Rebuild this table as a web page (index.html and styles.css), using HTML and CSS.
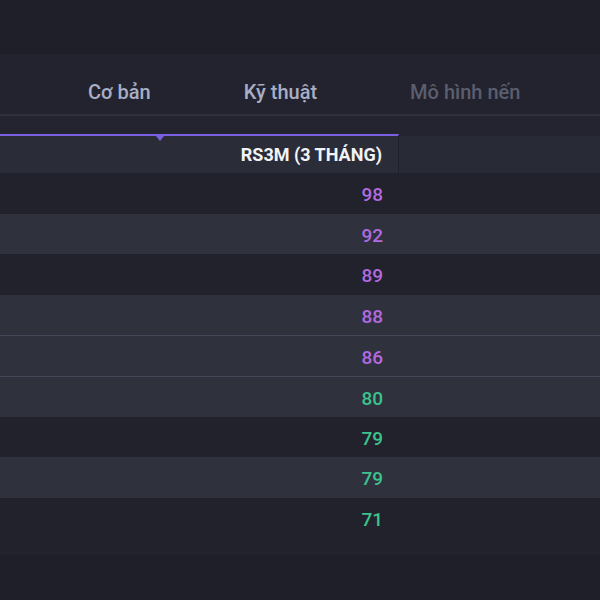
FILE: index.html
```html
<!DOCTYPE html>
<html lang="vi">
<head>
  <meta charset="UTF-8" />
  <title>RS3M</title>
  <meta name="viewport" content="width=device-width, initial-scale=1.0" />
  <link rel="stylesheet" href="styles.css">
</head>
<body>
  <div class="topbar"></div>

  <nav class="tabs">
    <span class="tab">Cơ bản</span>
    <span class="tab">Kỹ thuật</span>
    <span class="tab dim">Mô hình nến</span>
  </nav>

  <div class="gap"></div>

  <div class="grid">
    <div class="head main">RS3M (3 THÁNG)<i class="caret"></i></div>
    <div class="head rest"></div>

    <div class="row dark"><span class="num purple">98</span></div>
    <div class="row light"><span class="num purple">92</span></div>
    <div class="row dark"><span class="num purple">89</span></div>
    <div class="row light"><span class="num purple">88</span></div>
    <div class="row light line"><span class="num purple">86</span></div>
    <div class="row light line"><span class="num green">80</span></div>
    <div class="row dark"><span class="num green">79</span></div>
    <div class="row light"><span class="num green">79</span></div>
    <div class="row dark last"><span class="num green">71</span></div>
  </div>
</body>
</html>
```

FILE: styles.css
```css
body {
  margin: 0;
  background: #1e1f29;
  font-family: Roboto, "Liberation Sans", sans-serif;
}
.topbar {
  height: 54px;
}
.tabs {
  height: 62px;
  box-sizing: border-box;
  padding: 16px 0 0 42px;
  background: #22232e;
  border-bottom: 2px solid #2d2f3b;
  display: flex;
  align-items: center;
}
.tab {
  padding: 0 47px 0 46px;
  font-size: 20px;
  font-weight: 500;
  color: #a8aec6;
}
.tab.dim {
  color: #5b5e6e;
}
.gap {
  height: 18px;
  background: #23242f;
}
.grid {
  display: grid;
  grid-template-columns: 399px 1fr;
}
.head {
  height: 37px;
  border-top: 2px solid #23242f;
  display: flex;
  align-items: center;
  justify-content: flex-end;
}
.head.main {
  position: relative;
  background: #2a2c38;
  border-top-color: #7b5fe3;
  border-right: 1px solid #1f202a;
  padding-right: 16px;
  color: #f2f3f7;
  font-size: 18px;
  font-weight: 700;
}
.head.rest {
  background: #282a35;
}
.caret {
  position: absolute;
  top: 0;
  left: 156px;
  border-left: 4px solid transparent;
  border-right: 4px solid transparent;
  border-top: 5px solid #7b5fe3;
}
.row {
  grid-column: 1 / 3;
  height: 40.6px;
  box-sizing: border-box;
  padding-top: 3px;
  display: grid;
  grid-template-columns: 399px 1fr;
  align-items: center;
}
.row.dark {
  background: #21222c;
}
.row.light {
  background: #2f313d;
}
.row.line {
  border-top: 1px solid #444757;
}
.row.last {
  height: 57px;
  padding-bottom: 16px;
}
.num {
  text-align: right;
  padding-right: 16px;
  font-size: 19px;
  font-weight: 500;
}
.purple {
  color: #b26ae0;
}
.green {
  color: #3cc28d;
}
```
